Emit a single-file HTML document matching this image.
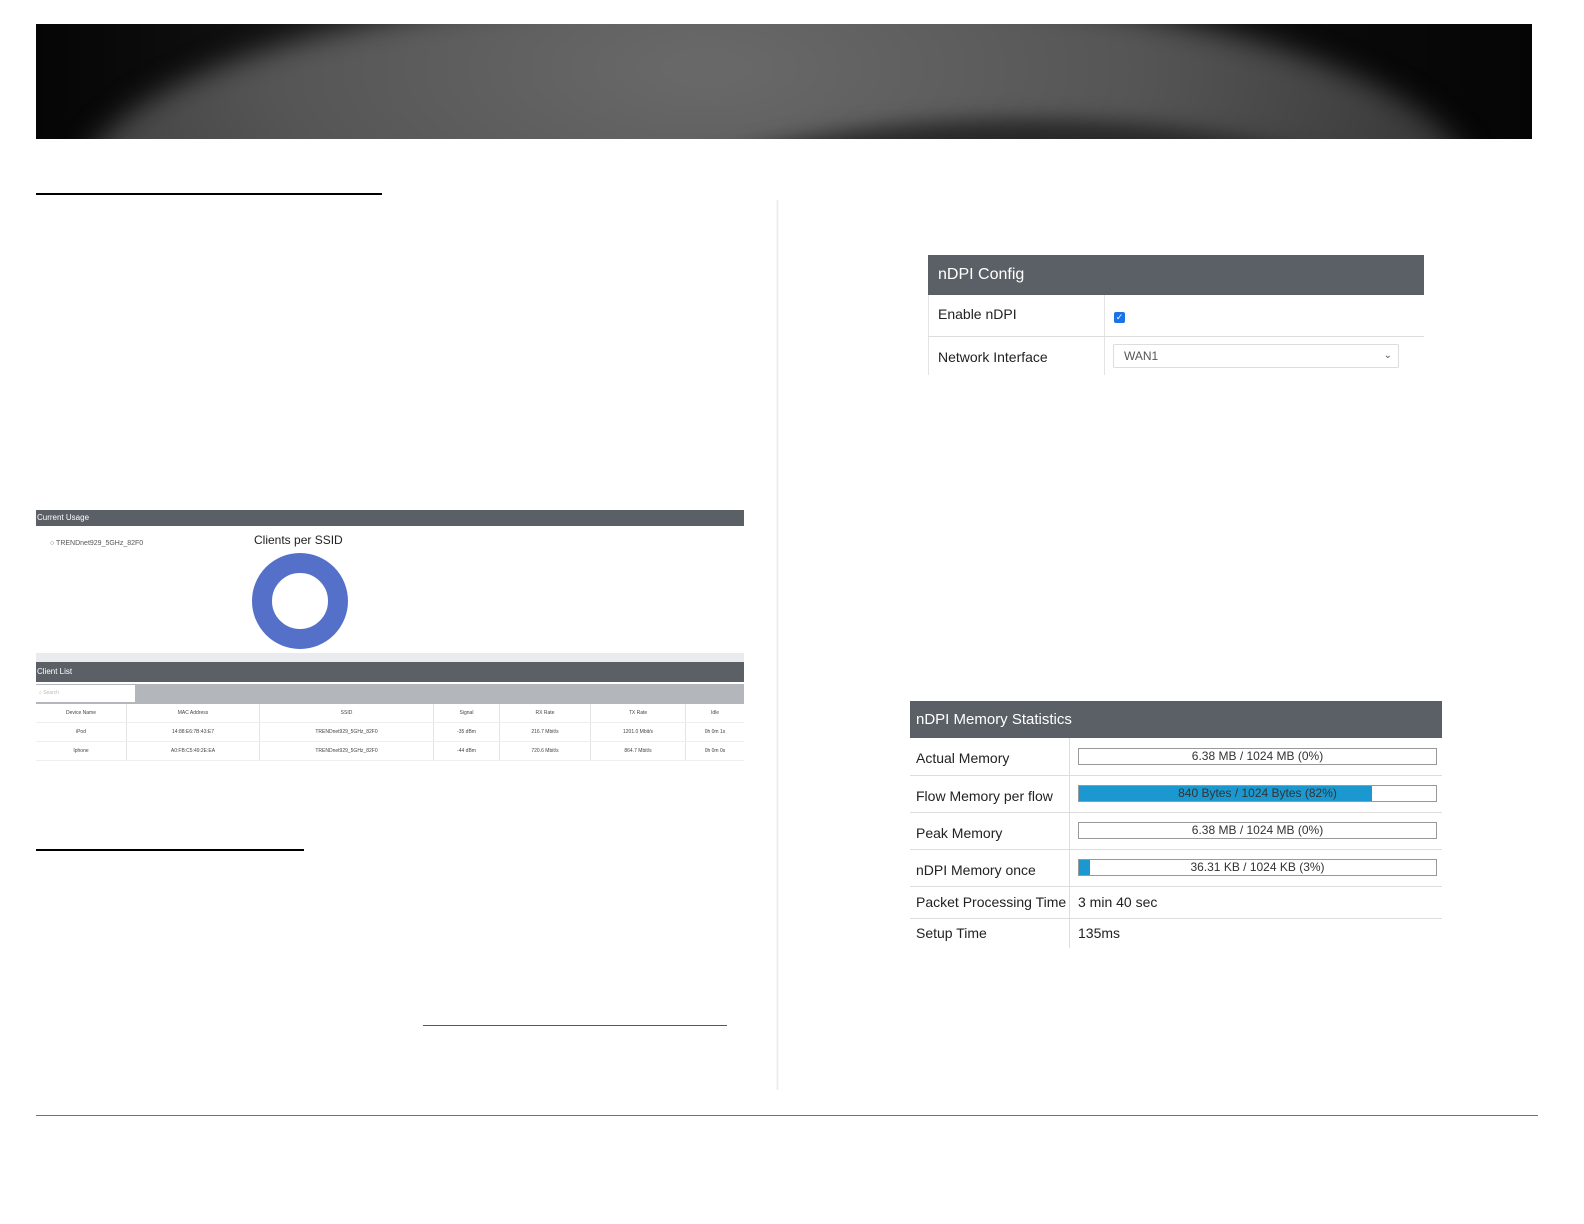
<!DOCTYPE html>
<html style="margin:0;padding:0;width:1584px;height:1224px;overflow:hidden"><head><meta charset="utf-8"><style>
body{margin:0;width:1584px;height:1224px;background:#fff;position:relative;font-family:"Liberation Sans",sans-serif;overflow:hidden}
.a{position:absolute}
.banner{left:36px;top:24px;width:1496px;height:115px;overflow:hidden;background:linear-gradient(90deg,#050505,#151515 20%,#1a1a1a 60%,#0a0a0a 85%,#050505)}
.arc{position:absolute;width:1400px;height:420px;border-radius:50%;background:radial-gradient(ellipse at 45% 20%,#6a6a6a 0%,#555 40%,#333 75%,#222 100%);filter:blur(14px)}
.arc2{position:absolute;width:900px;height:300px;border-radius:50%;background:radial-gradient(ellipse at 50% 30%,#262626 0%,#2c2c2c 60%,#333 100%);filter:blur(10px)}
.hd{background:#5b6067;color:#fff}
.ct td{font-size:5px;color:#444;text-align:center;border-right:1px solid #e4e4e4;border-bottom:1px solid #eee;padding:0}
table{border-collapse:collapse}
.mt td{border-bottom:1px solid #ddd;font-size:14px;color:#222;padding:0}
.bar{position:relative;width:357px;height:15px;border:1px solid #999;font-size:12px;color:#333;text-align:center;line-height:15px;background:#fff}
.bar i{position:absolute;left:0;top:0;bottom:0;background:#1b98cf}
.bar span{position:relative}
</style></head><body>
<div class="a banner"><div class="arc" style="top:-40px;left:40px"></div><div class="arc2" style="top:95px;left:540px"></div></div>
<div class="a" style="left:36px;top:193px;width:346px;height:2px;background:#000"></div>
<div class="a" style="left:36px;top:849px;width:268px;height:2px;background:#000"></div>
<div class="a" style="left:423px;top:1025px;width:304px;height:1px;background:#3355cc"></div>
<div class="a" style="left:776px;top:200px;width:3px;height:890px;background:linear-gradient(90deg,#fff,#e6e8ee,#fff)"></div>
<div class="a" style="left:36px;top:1115px;width:1502px;height:1px;background:#3a7bd5"></div>

<div class="a hd" style="left:36px;top:510px;width:708px;height:16px;font-size:8px;line-height:16px;padding-left:1px;box-sizing:border-box">Current Usage</div>
<div class="a" style="left:50px;top:540px;font-size:7px;color:#555">○ TRENDnet929_5GHz_82F0</div>
<div class="a" style="left:254px;top:533px;font-size:12px;color:#222">Clients per SSID</div>
<div class="a" style="left:252px;top:553px;width:56px;height:56px;border:20px solid #5570c8;border-radius:50%"></div>
<div class="a" style="left:36px;top:653px;width:708px;height:9px;background:#e9ebee"></div>
<div class="a hd" style="left:36px;top:662px;width:708px;height:20px;font-size:8px;line-height:20px;padding-left:1px;box-sizing:border-box">Client List</div>
<div class="a" style="left:36px;top:684px;width:708px;height:20px;background:#b3b6bb"></div>
<div class="a" style="left:36px;top:685px;width:99px;height:17px;background:#fff;font-size:5px;color:#bbb;line-height:17px;padding-left:3px;box-sizing:border-box">⌕ Search</div>
<table class="a ct" style="left:36px;top:704px;width:708px">
<tr style="height:18px"><td style="width:90px">Device Name</td><td style="width:132px">MAC Address</td><td style="width:173px">SSID</td><td style="width:65px">Signal</td><td style="width:90px">RX Rate</td><td style="width:94px">TX Rate</td><td style="border-right:0">Idle</td></tr>
<tr style="height:19px"><td>iPod</td><td>14:88:E6:7B:43:E7</td><td>TRENDnet929_5GHz_82F0</td><td>-35 dBm</td><td>216.7 Mbit/s</td><td>1201.0 Mbit/s</td><td style="border-right:0">0h 0m 1s</td></tr>
<tr style="height:19px"><td>Iphone</td><td>A0:FB:C5:49:2E:EA</td><td>TRENDnet929_5GHz_82F0</td><td>-44 dBm</td><td>720.6 Mbit/s</td><td>864.7 Mbit/s</td><td style="border-right:0">0h 0m 0s</td></tr>
</table>

<div class="a hd" style="left:928px;top:255px;width:496px;height:40px;font-size:16px;line-height:40px;padding-left:10px;box-sizing:border-box">nDPI Config</div>
<table class="a mt" style="left:928px;top:295px;width:496px;border-left:1px solid #e4e4e4">
<tr style="height:41px"><td style="width:166px;padding-left:9px;border-right:1px solid #e4e4e4;vertical-align:top;padding-top:11px">Enable nDPI</td><td style="padding-left:9px"><span style="display:inline-block;width:11px;height:11px;background:#1a73e8;border-radius:2px;color:#fff;font-size:9px;line-height:11px;text-align:center">✓</span></td></tr>
<tr style="height:39px"><td style="padding-left:9px;border-right:1px solid #e4e4e4;border-bottom:0;vertical-align:top;padding-top:12px">Network Interface</td><td style="padding-left:8px;border-bottom:0"><div style="width:274px;height:22px;border:1px solid #ddd;border-radius:2px;font-size:12px;color:#555;line-height:22px;padding-left:10px;position:relative">WAN1<span style="position:absolute;right:6px;top:0;font-size:10px">⌄</span></div></td></tr>
</table>

<div class="a hd" style="left:910px;top:701px;width:532px;height:37px;font-size:15px;line-height:38px;padding-left:6px;box-sizing:border-box">nDPI Memory Statistics</div>
<table class="a mt" style="left:910px;top:738px;width:532px">
<tr style="height:37px"><td style="width:153px;padding-left:6px;border-right:1px solid #ddd;padding-top:4px">Actual Memory</td><td style="padding-left:8px"><div class="bar"><span>6.38 MB / 1024 MB (0%)</span></div></td></tr>
<tr style="height:37px"><td style="padding-left:6px;border-right:1px solid #ddd;padding-top:4px">Flow Memory per flow</td><td style="padding-left:8px"><div class="bar"><i style="width:82%"></i><span>840 Bytes / 1024 Bytes (82%)</span></div></td></tr>
<tr style="height:37px"><td style="padding-left:6px;border-right:1px solid #ddd;padding-top:4px">Peak Memory</td><td style="padding-left:8px"><div class="bar"><span>6.38 MB / 1024 MB (0%)</span></div></td></tr>
<tr style="height:37px"><td style="padding-left:6px;border-right:1px solid #ddd;padding-top:4px">nDPI Memory once</td><td style="padding-left:8px"><div class="bar"><i style="width:3%"></i><span>36.31 KB / 1024 KB (3%)</span></div></td></tr>
<tr style="height:32px"><td style="padding-left:6px;border-right:1px solid #ddd">Packet Processing Time</td><td style="padding-left:8px">3 min 40 sec</td></tr>
<tr style="height:30px"><td style="padding-left:6px;border-right:1px solid #ddd;border-bottom:0">Setup Time</td><td style="padding-left:8px;border-bottom:0">135ms</td></tr>
</table>
</body></html>
